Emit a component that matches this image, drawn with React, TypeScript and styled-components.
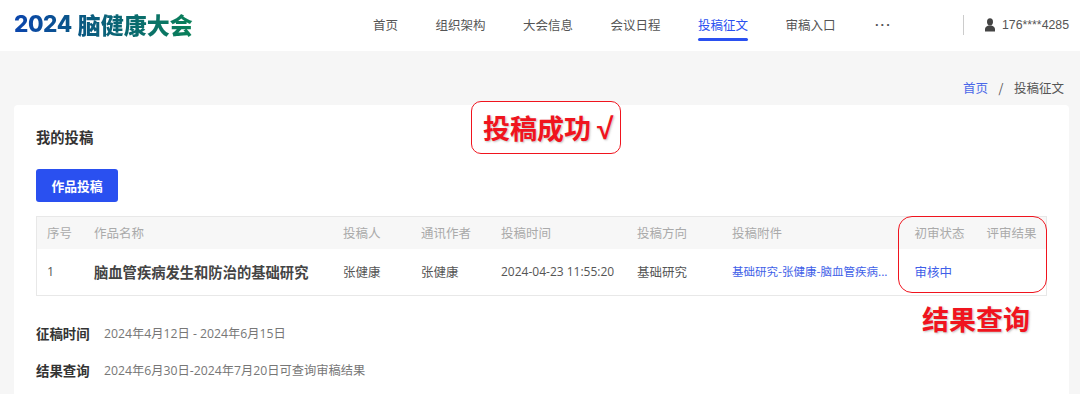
import React from "react";
import styled, { createGlobalStyle } from "styled-components";

const Global = createGlobalStyle`
  html, body { margin: 0; padding: 0; background: #fff; }
  body { font-family: "Noto Sans CJK SC", "Noto Sans", sans-serif; color: #333; }
  #root { width: 1080px; height: 404px; overflow: hidden; }
`;
const Page = styled.div`
  position: relative; width: 1080px; height: 404px; overflow: hidden; background: #fff;
`;
const Header = styled.header`
  height: 51px; display: flex; align-items: center; background: #fff; padding: 0 11px 0 14px; box-sizing: border-box;
`;
const LogoSlot = styled.div`
  width: 359px; flex: none;
`;
const Logo = styled.div`
  display: inline-flex; align-items: center; gap: 6px; margin-top: -2px; font-weight: 900;
  font-family: "Noto Sans CJK SC", sans-serif;
  background: linear-gradient(90deg, #0b45ad 0%, #0a5a80 40%, #0a8058 100%);
  background-clip: text; -webkit-background-clip: text; color: transparent;
`;
const LogoYear = styled.span`
  font: 800 22.5px/1 Inter, "Liberation Sans", sans-serif; letter-spacing: -0.4px;
`;
const LogoName = styled.span`
  font-size: 23px; line-height: 1.2; letter-spacing: 0;
`;
const Nav = styled.nav`
  display: flex; align-items: center; height: 51px; gap: 37.5px; font-size: 12.5px; width: 590px; flex: none;
`;
const NavItem = styled.a<{ $active?: boolean }>`
  position: relative; display: block; white-space: nowrap; line-height: 51px; color: ${p => (p.$active ? "#2a50f0" : "#555")};
  margin-top: -2px;
  ${p => p.$active && `&::after { content: ""; position: absolute; left: 0; right: 0; bottom: 9px; height: 3px; border-radius: 2px; background: #2a50f0; }`}
`;
const More = styled.span`
  font: 700 13px "Liberation Sans", sans-serif; color: #555; letter-spacing: 1.2px; margin-top: -2px; margin-left: 2px;
`;
const User = styled.div`
  display: flex; align-items: center; height: 20px; border-left: 1px solid #ccc; padding-left: 20px; margin-top: -1px;
  font: 12.3px "Liberation Sans", sans-serif; color: #555; white-space: nowrap; gap: 6px;
`;
const Main = styled.main`
  height: 343px; background: #f6f6f6; padding: 0 11px 0 14px; box-sizing: border-box; overflow: hidden;
`;
const Crumbs = styled.div`
  height: 54px; display: flex; justify-content: flex-end; align-items: center; gap: 10.5px; padding: 19px 5px 0 0; box-sizing: border-box; font-size: 12.5px; color: #555;
`;
const CrumbLink = styled.a` color: #4a68e8; `;
const Card = styled.section`
  background: #fff; border-radius: 4px; height: 300px; padding: 21px 22px 0; box-sizing: border-box;
`;
const Title = styled.h2`
  margin: 0; font-size: 14.3px; font-weight: 700; line-height: 22px; color: #333;
`;
const Submit = styled.button`
  display: block; margin-top: 21px; width: 82px; height: 33px; background: #2a50f0; color: #fff; border: 0; border-radius: 3px;
  font: 700 12.8px "Noto Sans CJK SC", sans-serif; padding: 0;
`;
const Table = styled.div`
  margin-top: 14px; border: 1px solid #e8e8e8; width: 1011px; box-sizing: border-box;
`;
const Row = styled.div<{ $head?: boolean }>`
  display: grid; grid-template-columns: 47px 249px 78px 80px 136px 95px 182.5px 72px 1fr; align-items: center;
  height: ${p => (p.$head ? 32 : 46)}px; padding: 0 0 2px 10px; box-sizing: border-box; background: ${p => (p.$head ? "#f7f7f7" : "#fff")};
  font-size: 12.5px; color: ${p => (p.$head ? "#aaa" : "#555")};
`;
const Cell = styled.div`
  white-space: nowrap;
`;
const Num = styled(Cell)`
  font-family: "Open Sans", sans-serif;
`;
const Name = styled(Cell)`
  font-size: 14.3px; font-weight: 700; color: #444;
`;
const Time = styled(Cell)`
  font-family: "Open Sans", "Liberation Sans", sans-serif; font-size: 12px;
`;
const FileLink = styled.a`
  display: block; white-space: nowrap; color: #3f5fe8; font-size: 11.5px;
`;
const Status = styled(Cell)`
  color: #3f5fe8; font-size: 12.5px;
`;
const Info = styled.div`
  display: flex; align-items: center; margin-top: 23px; height: 14px;
  &:first-of-type { margin-top: 30px; }
`;
const InfoList = styled.div``;
const InfoLabel = styled.span`
  width: 68px; font-size: 13.4px; font-weight: 700; color: #333;
`;
const InfoText = styled.span`
  font: 12.25px "Open Sans", "Noto Sans CJK SC", sans-serif; color: #777;
`;
const Note = styled.div`
  position: absolute; color: #f0141e; font-weight: 700; font-family: "Noto Sans CJK SC", sans-serif; white-space: nowrap; text-shadow: 1px 1px 2px rgba(80,80,80,.35);
`;
const Success = styled(Note)`
  left: 471px; top: 101px; width: 150px; height: 53px; box-sizing: border-box; border: 1px solid #f0141e; border-radius: 10px; background: #fff;
  font-size: 27px; line-height: 51px; padding-left: 11px;
`;
const Check = styled.span`
  font: 700 30px/1 "Liberation Sans", sans-serif; margin-left: 6px;
`;
const ResultTag = styled(Note)`
  left: 922px; top: 300px; font-size: 27px; line-height: 38px;
`;
const Outline = styled.div`
  position: absolute; left: 898px; top: 216px; width: 149px; height: 77px; box-sizing: border-box; border: 1px solid #f0141e; border-radius: 14px;
`;

const User16 = () => (
  <svg width="12" height="14" viewBox="0 0 12 14" fill="#444" style={{ flex: "none" }}>
    <ellipse cx="6" cy="3.8" rx="3" ry="3.6" />
    <path d="M1 13.5v-2.6C1 9.2 3 8.4 4.5 7.6h3C9 8.4 11 9.2 11 10.9v2.6z" />
  </svg>
);

export default function App() {
  return (
    <Page>
      <Global />
      <Header>
        <LogoSlot>
          <Logo>
            <LogoYear>2024</LogoYear>
            <LogoName>脑健康大会</LogoName>
          </Logo>
        </LogoSlot>
        <Nav>
          <NavItem>首页</NavItem>
          <NavItem>组织架构</NavItem>
          <NavItem>大会信息</NavItem>
          <NavItem>会议日程</NavItem>
          <NavItem $active>投稿征文</NavItem>
          <NavItem>审稿入口</NavItem>
          <More>···</More>
        </Nav>
        <User>
          <User16 />
          176****4285
        </User>
      </Header>
      <Main>
        <Crumbs>
          <CrumbLink>首页</CrumbLink>
          <span>/</span>
          <span>投稿征文</span>
        </Crumbs>
        <Card>
          <Title>我的投稿</Title>
          <Submit>作品投稿</Submit>
          <Table>
            <Row $head>
              <Cell>序号</Cell>
              <Cell>作品名称</Cell>
              <Cell>投稿人</Cell>
              <Cell>通讯作者</Cell>
              <Cell>投稿时间</Cell>
              <Cell>投稿方向</Cell>
              <Cell>投稿附件</Cell>
              <Cell>初审状态</Cell>
              <Cell>评审结果</Cell>
            </Row>
            <Row>
              <Num>1</Num>
              <Name>脑血管疾病发生和防治的基础研究</Name>
              <Cell>张健康</Cell>
              <Cell>张健康</Cell>
              <Time>2024-04-23 11:55:20</Time>
              <Cell>基础研究</Cell>
              <Cell><FileLink>基础研究-张健康-脑血管疾病...</FileLink></Cell>
              <Status>审核中</Status>
              <Cell />
            </Row>
          </Table>
          <InfoList>
            <Info>
              <InfoLabel>征稿时间</InfoLabel>
              <InfoText>2024年4月12日 - 2024年6月15日</InfoText>
            </Info>
            <Info>
              <InfoLabel>结果查询</InfoLabel>
              <InfoText>2024年6月30日-2024年7月20日可查询审稿结果</InfoText>
            </Info>
          </InfoList>
        </Card>
      </Main>
      <Success>投稿成功<Check>√</Check></Success>
      <Outline />
      <ResultTag>结果查询</ResultTag>
    </Page>
  );
}
